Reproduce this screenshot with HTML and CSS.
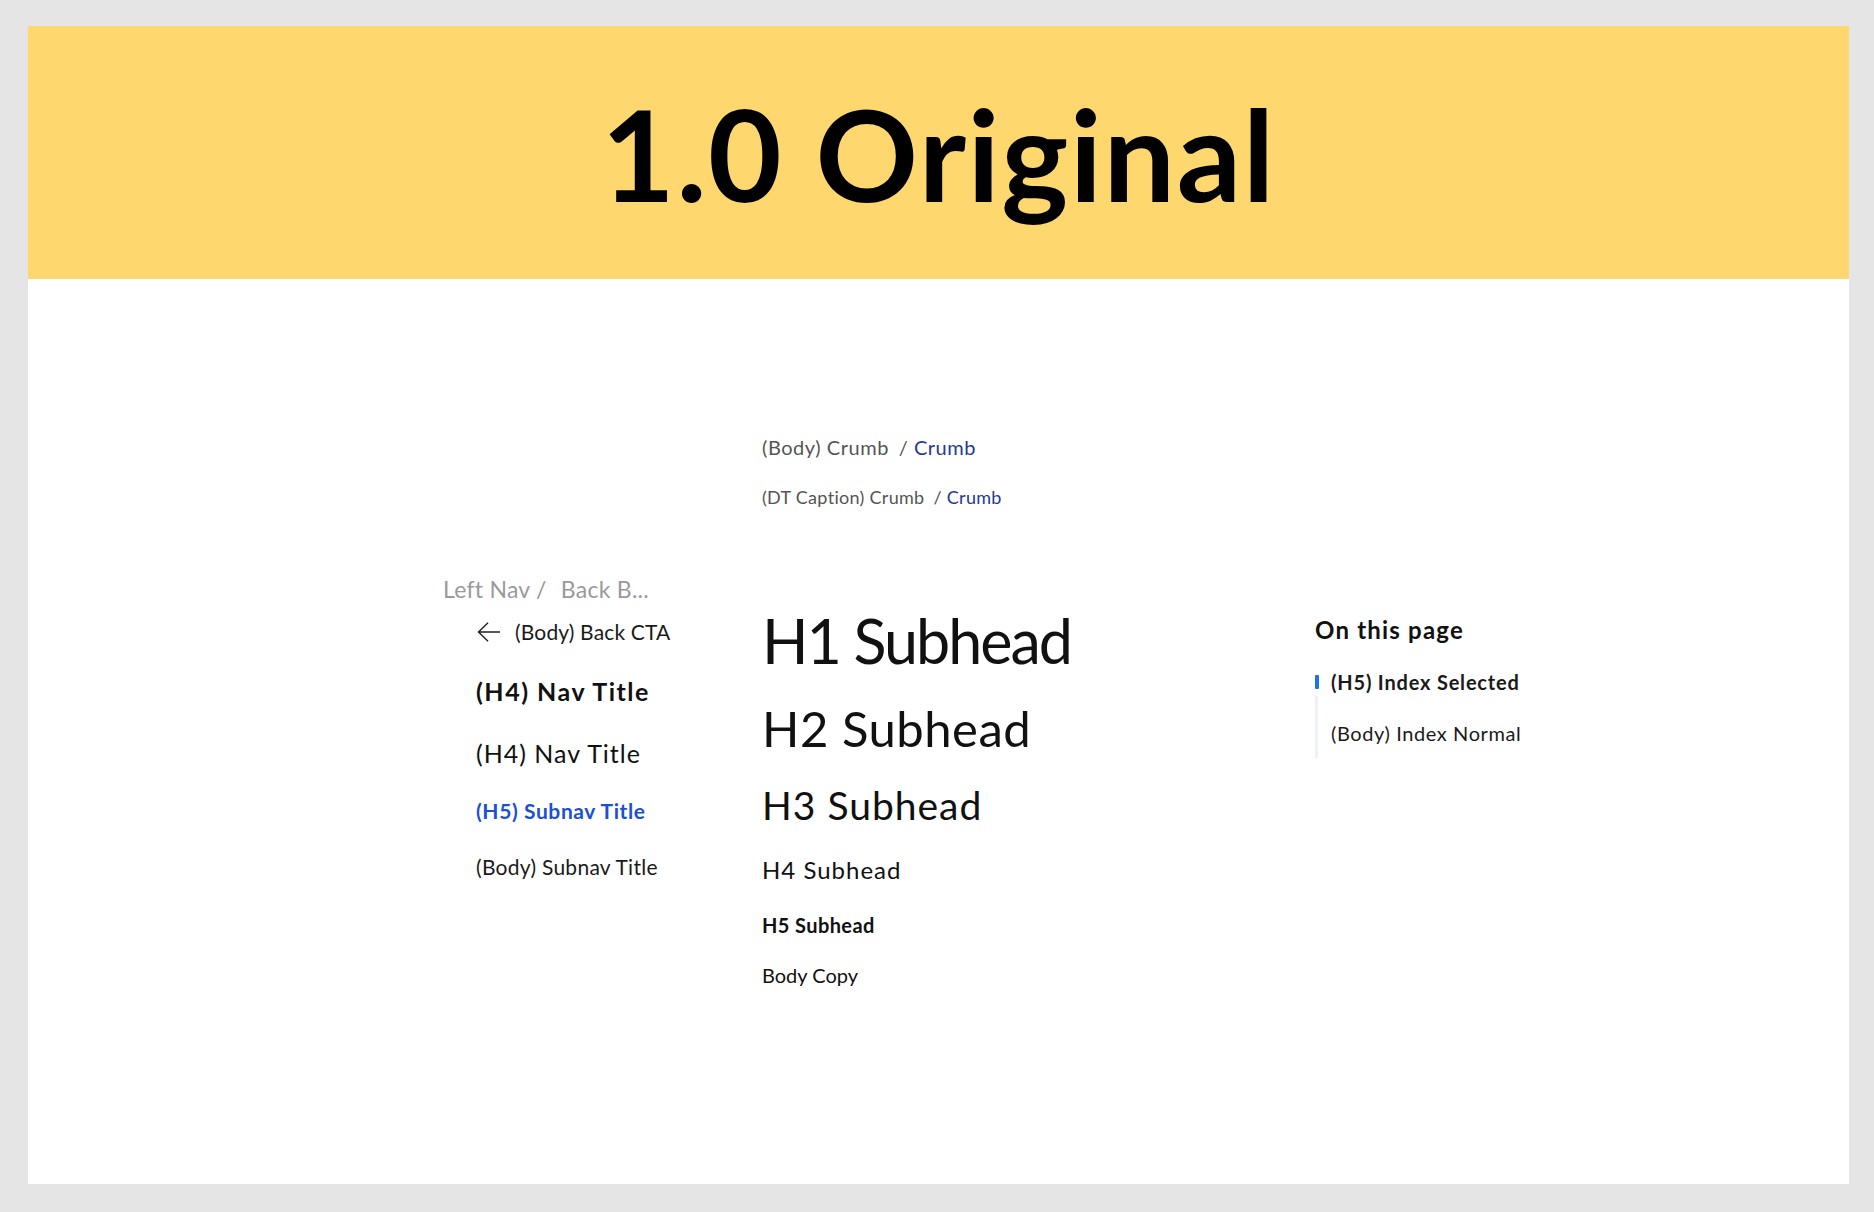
FILE: index.html
```html
<!DOCTYPE html>
<html lang="en">
<head>
    <meta charset="UTF-8">
    <title>1.0 Original</title>
    <link rel="stylesheet" href="styles.css">
</head>
<body>
    <div class="frame">
        <header class="banner">
            <h1 class="banner-title">1.0 Original</h1>
        </header>

        <section class="content">
            <!-- Crumbs -->
            <div class="crumbs">
                <div class="crumb crumb-body">(Body) Crumb <span class="sep">/</span> <span class="crumb-link">Crumb</span></div>
                <div class="crumb crumb-caption">(DT Caption) Crumb <span class="sep">/</span> <span class="crumb-link">Crumb</span></div>
            </div>

            <div class="columns">
                <!-- Left nav -->
                <nav class="left-nav">
                    <div class="nav-path">Left Nav / <span class="nav-path-last">Back B...</span></div>
                    <div class="nav-back">
                        <svg class="back-arrow" width="24" height="20" viewBox="0 0 24 20">
                            <path d="M23 10H1.5M11 0.8L1.5 10l9.5 9.2" fill="none" stroke="#222" stroke-width="1.4"/>
                        </svg>
                        <span>(Body) Back CTA</span>
                    </div>
                    <div class="nav-title nav-title-bold">(H4) Nav Title</div>
                    <div class="nav-title">(H4) Nav Title</div>
                    <div class="subnav subnav-active">(H5) Subnav Title</div>
                    <div class="subnav">(Body) Subnav Title</div>
                </nav>

                <!-- Type scale -->
                <div class="type-scale">
                    <div class="t-h1">H1 Subhead</div>
                    <div class="t-h2">H2 Subhead</div>
                    <div class="t-h3">H3 Subhead</div>
                    <div class="t-h4">H4 Subhead</div>
                    <div class="t-h5">H5 Subhead</div>
                    <div class="t-body">Body Copy</div>
                </div>

                <!-- On this page -->
                <aside class="index">
                    <div class="index-title">On this page</div>
                    <div class="index-item index-selected"><span class="index-bar"></span>(H5) Index Selected</div>
                    <div class="index-item index-normal">(Body) Index Normal</div>
                </aside>
            </div>
        </section>
    </div>
</body>
</html>
```

FILE: styles.css
```css
body {
    margin: 0;
    padding: 26px 25px 28px 28px;
    background-color: #e5e5e5;
    font-family: 'Lato', 'Open Sans', sans-serif;
    color: #111;
}
.frame {
    background-color: #fff;
    height: 1158px;
}
.banner {
    height: 253px;
    background-color: #fed86f;
    display: flex;
    align-items: center;
    justify-content: center;
}
.banner-title {
    margin: 0;
    font-size: 127px;
    line-height: 124px;
    font-weight: 700;
    color: #000;
    letter-spacing: 1.5px;
}
.content {
    padding-left: 415px;
}
.crumbs {
    margin-left: 319px;
    padding-top: 154px;
}
.crumb {
    color: #555;
}
.crumb-body {
    font-size: 20px;
    line-height: 28px;
    letter-spacing: 0.55px;
}
.crumb-caption {
    font-size: 18px;
    line-height: 24px;
    margin-top: 24px;
    letter-spacing: 0.3px;
}
.sep {
    margin-left: 4px;
}
.crumb-link {
    color: #1f3a93;
}
.columns {
    display: grid;
    grid-template-columns: 319px 553px 1fr;
    margin-top: 64px;
}

/* left nav */
.left-nav {
    display: flex;
    flex-direction: column;
}
.nav-path {
    font-size: 23px;
    line-height: 32px;
    color: #9a9a9a;
    letter-spacing: 0.25px;
}
.nav-path-last {
    margin-left: 8px;
}
.nav-back {
    display: flex;
    align-items: center;
    gap: 14px;
    margin: 12px 0 0 34px;
    font-size: 21px;
    line-height: 30px;
    color: #1a1a1a;
    letter-spacing: 0.15px;
}
.back-arrow {
    display: block;
}
.nav-title {
    margin: 28px 0 0 33px;
    font-size: 25px;
    line-height: 34px;
    color: #111;
    letter-spacing: 1px;
}
.nav-title-bold {
    font-weight: 700;
    margin-top: 27px;
    letter-spacing: 1.5px;
}
.subnav {
    margin: 26px 0 0 33px;
    font-size: 21px;
    line-height: 30px;
    color: #1a1a1a;
    letter-spacing: 0.27px;
}
.subnav-active {
    font-weight: 700;
    color: #1d4fd1;
    letter-spacing: 0.6px;
}

/* type scale */
.type-scale {
    display: flex;
    flex-direction: column;
    color: #111;
}
.t-h1 {
    margin-top: 32px;
    font-size: 61px;
    line-height: 72px;
    letter-spacing: -2px;
}
.t-h2 {
    margin-top: 21px;
    font-size: 49px;
    line-height: 60px;
    letter-spacing: 0.5px;
}
.t-h3 {
    margin-top: 23px;
    font-size: 39px;
    line-height: 48px;
    letter-spacing: 1px;
}
.t-h4 {
    margin-top: 25px;
    font-size: 24px;
    line-height: 32px;
    letter-spacing: 1px;
}
.t-h5 {
    margin-top: 24px;
    font-size: 20px;
    line-height: 30px;
    font-weight: 700;
    letter-spacing: 0.4px;
}
.t-body {
    margin-top: 21px;
    font-size: 20px;
    line-height: 28px;
}

/* on this page */
.index {
    display: flex;
    flex-direction: column;
}
.index-title {
    margin-top: 41px;
    font-size: 24px;
    line-height: 32px;
    font-weight: 700;
    letter-spacing: 1.2px;
}
.index-item {
    font-size: 20px;
    line-height: 28px;
    color: #1a1a1a;
}
.index-selected {
    display: flex;
    align-items: center;
    gap: 12px;
    margin-top: 22px;
    font-weight: 700;
    letter-spacing: 0.8px;
}
.index-bar {
    width: 4px;
    height: 14px;
    background-color: #1a73e8;
    border-radius: 1px;
}
.index-normal {
    border-left: 3px solid #eef1f6;
    padding: 23px 0 11px 13px;
    letter-spacing: 0.6px;
}
```
